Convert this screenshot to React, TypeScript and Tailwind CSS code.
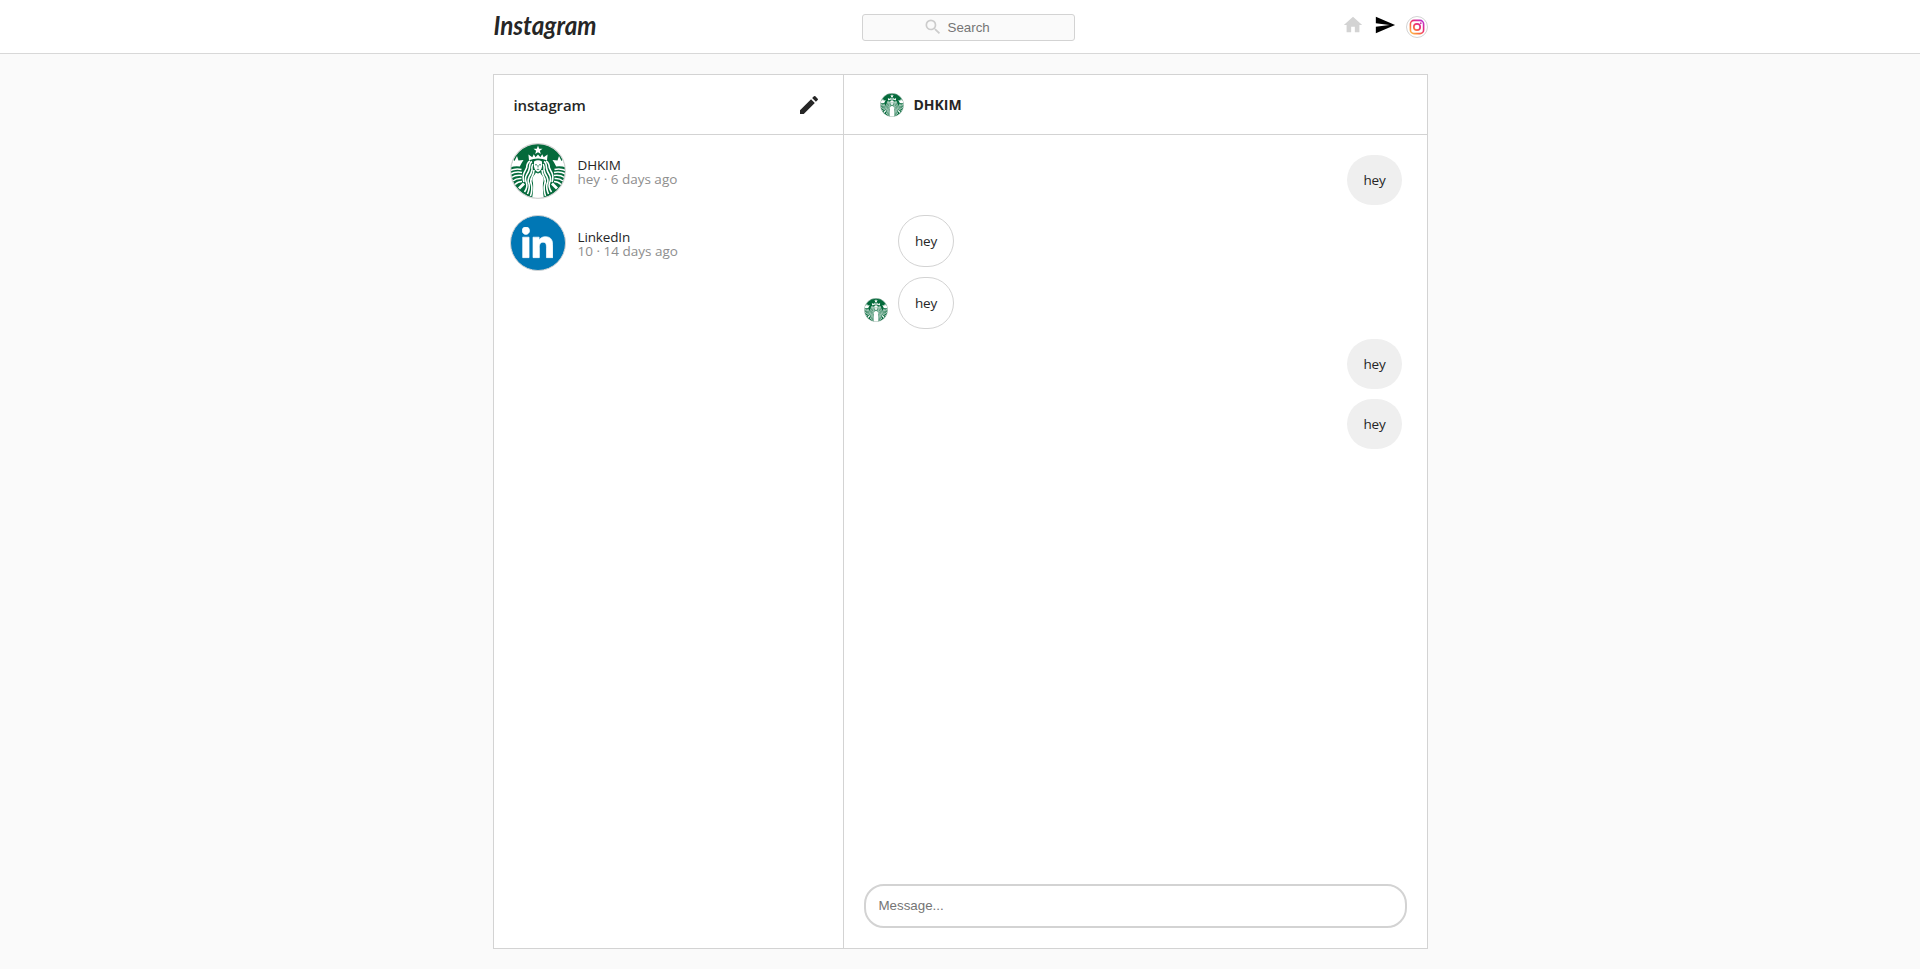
import React from "react";
import { MdEdit, MdHome, MdSearch, MdSend } from "react-icons/md";
import { FaLinkedinIn } from "react-icons/fa";

function SirenAvatar({ className }: { className: string }) {
  const half = (
    <g>
      <path d="M1 14.5 L4.5 18 L7 13 L8.5 17.5 L13.5 17 Q11.5 20 9.8 23.5 Q5.5 22.5 0 24.5 Q3 19 1 14.5Z" fill="#fff" />
      <g fill="none" stroke="#fff" strokeWidth="1.5">
        <path d="M0 27.5 Q6 25 11.5 26.5" />
        <path d="M.5 31 Q6 28 12 29.5" />
        <path d="M1.5 34.5 Q6 31.5 12 32.5" />
        <path d="M3 38 Q6.5 35 11.5 35.5" />
        <path d="M5 41.5 Q8 38.5 12 38.5" />
        <path d="M9 45.5 L14 40.5" strokeWidth="2.8" />
      </g>
      <g fill="none" stroke="#fff" strokeWidth="1.6">
        <path d="M22 18.5 Q19.5 20 19.5 25 Q19 28 16.5 32 Q14.4 36 16.5 40 Q18 44 14.5 49" />
        <path d="M22.8 21 Q21.3 24 22 27 Q21.5 30 19 34 Q17.2 38 19 41 Q20 45 17.5 51" />
        <path d="M24 27 Q24 30 21.7 34.5 Q19.8 38 21.5 42 Q22.6 46 20.5 53" />
        <path d="M20 18 Q16.7 20 16.7 24.5 Q15.6 27 14 30 Q12.2 34 14 39" />
      </g>
      <path d="M28 11.6 L25.6 14.2 L23.8 11.2 L22.3 14.2 L18.4 11.6 L19 17.2 Q23.5 15.4 28 15.4Z" fill="#fff" />
    </g>
  );
  return (
    <svg viewBox="0 0 56 56" className={className} aria-hidden="true">
      <defs>
        <clipPath id="siren-disc">
          <circle cx="28" cy="28" r="27.2" />
        </clipPath>
      </defs>
      <g clipPath="url(#siren-disc)">
        <rect width="56" height="56" fill="#046a3b" />
        {half}
        <g transform="translate(56 0) scale(-1 1)">{half}</g>
        <path d="M28 2.6 L29.2 5.7 L32.5 5.8 L29.9 7.8 L30.8 11 L28 9.2 L25.2 11 L26.1 7.8 L23.5 5.8 L26.8 5.7Z" fill="#fff" />
        <path d="M24 18.5 Q28 15.8 32 18.5 V23.5 Q31.4 27.6 28 29 Q24.6 27.6 24 23.5Z" fill="#fff" />
        <path d="M26 29 Q28 31 30 29 Q30.5 31 32.5 33 Q34.5 36 33 40 Q32.4 46 34 56 H22 Q23.6 46 23 40 Q21.5 36 23.5 33 Q25.5 31 26 29Z" fill="#fff" />
        <g stroke="#046a3b" fill="none" strokeWidth=".8">
          <path d="M25 21.8 H27 M29 21.8 H31 M28 22 V24.5 M26.8 26.3 H29.2" />
          <path d="M25.8 29.2 Q28 31 30.2 29.2" />
        </g>
      </g>
      <circle cx="28" cy="28" r="27.4" fill="none" stroke="#d3d3d3" strokeWidth="1.1" />
    </svg>
  );
}

function CameraAvatar() {
  return (
    <svg viewBox="0 0 22 22" className="size-[22px]" aria-hidden="true">
      <defs>
        <linearGradient id="camera" x1="4" y1="18" x2="17" y2="4" gradientUnits="userSpaceOnUse">
          <stop offset="0" stopColor="#ffc94f" />
          <stop offset=".3" stopColor="#fb7a3c" />
          <stop offset=".6" stopColor="#ec2f72" />
          <stop offset="1" stopColor="#b832d8" />
        </linearGradient>
      </defs>
      <circle cx="11" cy="11" r="10.5" fill="#fff" stroke="#d3d3d3" />
      <rect x="4.4" y="4.4" width="13.2" height="13.2" rx="3.6" fill="none" stroke="url(#camera)" strokeWidth="1.6" />
      <circle cx="11" cy="11" r="3.2" fill="none" stroke="url(#camera)" strokeWidth="1.7" />
      <circle cx="14.8" cy="7.2" r=".9" fill="#cf35b0" />
    </svg>
  );
}

function Conversation({ avatar, name, detail }: { avatar: React.ReactNode; name: string; detail: string }) {
  return (
    <li className="flex h-[72px] items-center px-4">
      {avatar}
      <div className="mt-px ml-3 flex flex-col text-[13.5px] leading-[14px]">
        <span className="tracking-[-0.01em]">{name}</span>
        <span className="text-[#8e8e8e]">{detail}</span>
      </div>
    </li>
  );
}

function Sent({ text }: { text: string }) {
  return (
    <div className="mr-[5px] flex h-[50px] w-[55px] shrink-0 items-center justify-center self-end rounded-[25px] bg-[#efefef] pl-px text-[13.5px] tracking-[-0.02em]">
      {text}
    </div>
  );
}

function Received({ text, avatar }: { text: string; avatar?: boolean }) {
  return (
    <div className="flex items-end">
      <div className="mr-[10px] mb-[7px] size-6">{avatar && <SirenAvatar className="size-6" />}</div>
      <div className="flex h-[52px] w-[56px] items-center justify-center rounded-[26px] border border-[#d3d3d3] pl-px text-[13.5px] tracking-[-0.02em]">
        {text}
      </div>
    </div>
  );
}

export default function App() {
  return (
    <div className="flex h-[969px] flex-col items-center overflow-hidden bg-[#fafafa] font-['Open_Sans','Noto_Sans',sans-serif] text-[#262626]">
      <header className="flex h-[54px] w-full shrink-0 justify-center border-b border-[#d8d8d8] bg-white">
        <div className="flex w-[935px] items-start">
          <h1 className="mt-[9px] w-[369px]">
            <svg viewBox="0 0 108 40" className="h-[40px] w-[108px] overflow-visible" role="img">
              <text
                x="0.5"
                y="26"
                textLength="103"
                lengthAdjust="spacingAndGlyphs"
                className="fill-[#262626] font-['Lato',sans-serif] text-[26px] font-bold italic"
              >
                Instagram
              </text>
            </svg>
          </h1>
          <div className="mt-[14px] flex h-[27px] w-[213px] items-center rounded-[3px] border border-[#d3d3d3] bg-[#fafafa] pl-[60px]">
            <MdSearch className="mb-px size-5 text-[#ccc]" />
            <span className="ml-[5px] font-['Liberation_Sans',sans-serif] text-[13.33px] text-[#757575]">Search</span>
          </div>
          <nav className="ml-auto flex">
            <MdHome className="mt-[14px] size-[22px] text-[#d3d3d3]" />
            <MdSend className="mt-[14px] ml-[10px] size-[22px] text-black" />
            <div className="mt-4 ml-[10px]">
              <CameraAvatar />
            </div>
          </nav>
        </div>
      </header>

      <main className="mt-5 flex h-[875px] w-[935px] shrink-0 border border-[#d3d3d3] bg-white">
        <aside className="w-[350px] border-r border-[#d3d3d3]">
          <div className="flex h-[60px] items-center justify-between border-b border-[#d3d3d3] pr-[22px] pl-5">
            <h2 className="pt-px text-[15px] font-semibold tracking-[-0.01em]">instagram</h2>
            <MdEdit className="size-6" />
          </div>
          <ul>
            <Conversation avatar={<SirenAvatar className="size-14" />} name="DHKIM" detail="hey · 6 days ago" />
            <Conversation
              avatar={
                <div className="flex size-14 items-center justify-center rounded-full border border-[#d3d3d3] bg-[#0077b5] text-white">
                  <FaLinkedinIn className="mt-[3px] h-[35px] w-[31px] stroke-white stroke-[10px]" />
                </div>
              }
              name="LinkedIn"
              detail="10 · 14 days ago"
            />
          </ul>
        </aside>
        <section className="flex flex-1 flex-col">
          <div className="flex h-[60px] items-center border-b border-[#d3d3d3] pl-9">
            <SirenAvatar className="size-6" />
            <h2 className="ml-[10px] text-sm font-bold">DHKIM</h2>
          </div>
          <div className="flex flex-1 flex-col gap-[10px] p-5">
            <Sent text="hey" />
            <Received text="hey" />
            <Received text="hey" avatar />
            <Sent text="hey" />
            <Sent text="hey" />
            <input
              placeholder="Message..."
              className="mt-auto h-[44px] w-[543px] rounded-[20px] border-2 border-[#d3d3d3] px-[13px] pb-[2px] font-['Liberation_Sans',sans-serif] text-[13.33px] placeholder:text-[#757575]"
            />
          </div>
        </section>
      </main>
    </div>
  );
}
